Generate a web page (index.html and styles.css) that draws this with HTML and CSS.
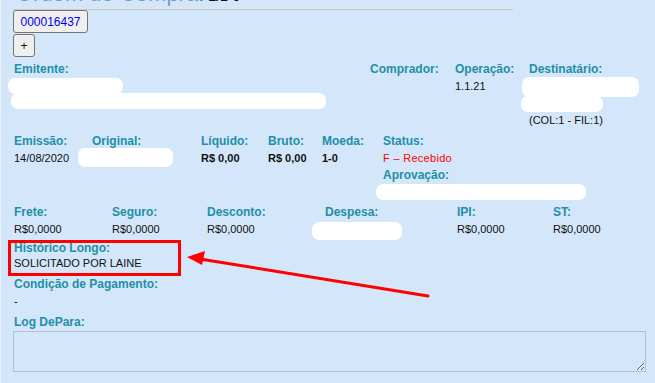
FILE: index.html
```html
<!DOCTYPE html>
<html lang="pt-BR">
<head>
    <meta charset="UTF-8">
    <meta name="viewport" content="width=device-width, initial-scale=1.0">
    <title>Ordem de Compra</title>
    <link rel="stylesheet" href="styles.css">
</head>
<body>

<div class="pedido">
    <h1 class="titulo">Ordem de Compra<span class="titulo-sep">:</span><span class="titulo-num">1/1-0</span></h1>
    <hr class="linha">

    <button type="button" class="btn-numero">000016437</button>
    <button type="button" class="btn-mais">+</button>

    <div class="linha-campos linha-1">
        <div class="campo">
            <div class="rotulo">Emitente:</div>
            <span class="tarja t-emit1"></span>
            <span class="tarja t-emit2"></span>
        </div>
        <div class="campo">
            <div class="rotulo">Comprador:</div>
        </div>
        <div class="campo">
            <div class="rotulo">Operação:</div>
            <div class="valor">1.1.21</div>
        </div>
        <div class="campo">
            <div class="rotulo">Destinatário:</div>
            <span class="tarja t-dest1"></span>
            <span class="tarja t-dest2"></span>
            <div class="valor">(COL:1 - FIL:1)</div>
        </div>
    </div>

    <div class="linha-campos linha-2">
        <div class="campo">
            <div class="rotulo">Emissão:</div>
            <div class="valor">14/08/2020</div>
        </div>
        <div class="campo">
            <div class="rotulo">Original:</div>
            <span class="tarja t-original"></span>
        </div>
        <div class="campo">
            <div class="rotulo">Líquido:</div>
            <div class="valor forte">R$ 0,00</div>
        </div>
        <div class="campo">
            <div class="rotulo">Bruto:</div>
            <div class="valor forte">R$ 0,00</div>
        </div>
        <div class="campo">
            <div class="rotulo">Moeda:</div>
            <div class="valor forte">1-0</div>
        </div>
        <div class="campo">
            <div class="rotulo">Status:</div>
            <div class="valor status">F – Recebido</div>
            <div class="rotulo">Aprovação:</div>
            <span class="tarja t-aprov"></span>
        </div>
    </div>

    <div class="linha-campos linha-3">
        <div class="campo">
            <div class="rotulo">Frete:</div>
            <div class="valor">R$0,0000</div>
        </div>
        <div class="campo">
            <div class="rotulo">Seguro:</div>
            <div class="valor">R$0,0000</div>
        </div>
        <div class="campo">
            <div class="rotulo">Desconto:</div>
            <div class="valor">R$0,0000</div>
        </div>
        <div class="campo">
            <div class="rotulo">Despesa:</div>
            <span class="tarja t-despesa"></span>
        </div>
        <div class="campo">
            <div class="rotulo">IPI:</div>
            <div class="valor">R$0,0000</div>
        </div>
        <div class="campo">
            <div class="rotulo">ST:</div>
            <div class="valor">R$0,0000</div>
        </div>
    </div>

    <div class="destaque">
        <div class="rotulo">Histórico Longo:</div>
        <div class="valor">SOLICITADO POR LAINE</div>
    </div>

    <div class="campo-simples">
        <div class="rotulo">Condição de Pagamento:</div>
        <div class="valor">-</div>
    </div>

    <div class="campo-simples log">
        <div class="rotulo">Log DePara:</div>
        <textarea class="log-depara"></textarea>
    </div>

    <!-- seta de anotação -->
    <svg class="seta" width="655" height="383" viewBox="0 0 655 383">
        <line x1="428" y1="296" x2="200" y2="259" stroke="#f00" stroke-width="3" stroke-linecap="round"/>
        <polygon points="187,257 205,251 202,265" fill="#f00"/>
    </svg>
</div>

</body>
</html>
```

FILE: styles.css
```css
body {
    margin: 0;
    padding: 0;
    background-color: #d4e6f9;
    font-family: "Liberation Sans", Arial, sans-serif;
    font-size: 11px;
    color: #111;
    overflow: hidden;
}

.pedido {
    display: flow-root;
    position: relative;
    padding-left: 12px;
    height: 383px;
    border-left: 1px solid #e6f0fb;
    box-sizing: border-box;
}

.titulo {
    margin: -19px 0 2px 3px;
    font-size: 22px;
    line-height: 26px;
    font-weight: normal;
    color: #7b9bc0;
    white-space: nowrap;
}

.titulo-sep {
    color: #1f8fa8;
}

.titulo-num {
    margin-left: 4px;
    font-size: 14px;
    line-height: 1;
    font-weight: bold;
    color: #111;
}

.linha {
    width: 500px;
    margin: 0;
    border: none;
    border-top: 1px solid #cdc7b6;
}

.btn-numero,
.btn-mais {
    display: block;
    height: 23px;
    padding: 0;
    font-family: "Liberation Sans", Arial, sans-serif;
    font-size: 12px;
    background-color: #efefef;
    border: 1px solid #767676;
    border-radius: 3px;
}

.btn-numero {
    width: 75px;
    color: #0000ee;
}

.btn-mais {
    width: 22px;
    margin-top: 1px;
    color: #111;
}

.linha-campos {
    display: grid;
}

.linha-1 {
    margin-top: 4px;
    grid-template-columns: 356px 85px 74px 1fr;
}

.linha-2 {
    margin-top: 4px;
    grid-template-columns: 78px 109px 67px 54px 61px 1fr;
}

.linha-3 {
    margin-top: 4px;
    grid-template-columns: 98px 95px 118px 132px 96px 1fr;
}

.campo,
.campo-simples {
    padding-left: 1px;
}

.rotulo {
    font-size: 12px;
    font-weight: bold;
    line-height: 17px;
    color: #1f8fa8;
}

.valor {
    line-height: 17px;
}

.forte {
    font-weight: bold;
}

.status {
    color: #f00;
    letter-spacing: 0.3px;
}

.tarja {
    display: block;
    background-color: #fff;
    border-radius: 7px;
}

.t-emit1 { width: 115px; height: 16px; margin: 0 0 -1px -6px; }
.t-emit2 { width: 315px; height: 16px; margin-left: -3px; }
.t-dest1 { width: 117px; height: 20px; margin: -1px 0 -1px -7px; }
.t-dest2 { width: 82px; height: 16px; margin-left: -8px; }
.t-original { width: 95px; height: 19px; margin: -2px 0 0 -14px; }
.t-aprov { width: 210px; height: 16px; margin-left: -7px; }
.t-despesa { width: 90px; height: 18px; margin: 1px 0 0 -13px; }

.destaque {
    width: 164px;
    margin: 0 0 0 -5px;
    padding: 0 0 0 3px;
    border: 3px solid #f00;
}

.destaque .rotulo,
.destaque .valor {
    line-height: 15px;
}

.destaque .rotulo {
    margin-top: -2px;
}

.destaque .valor {
    margin-bottom: 2px;
}

.log {
    margin-top: 4px;
}

.log-depara {
    display: block;
    width: 633px;
    height: 41px;
    margin-left: -1px;
    box-sizing: border-box;
    background: transparent;
    border: 1px solid #b4c2cf;
    resize: both;
}

.seta {
    position: absolute;
    top: 0;
    left: -1px;
    pointer-events: none;
}
```
